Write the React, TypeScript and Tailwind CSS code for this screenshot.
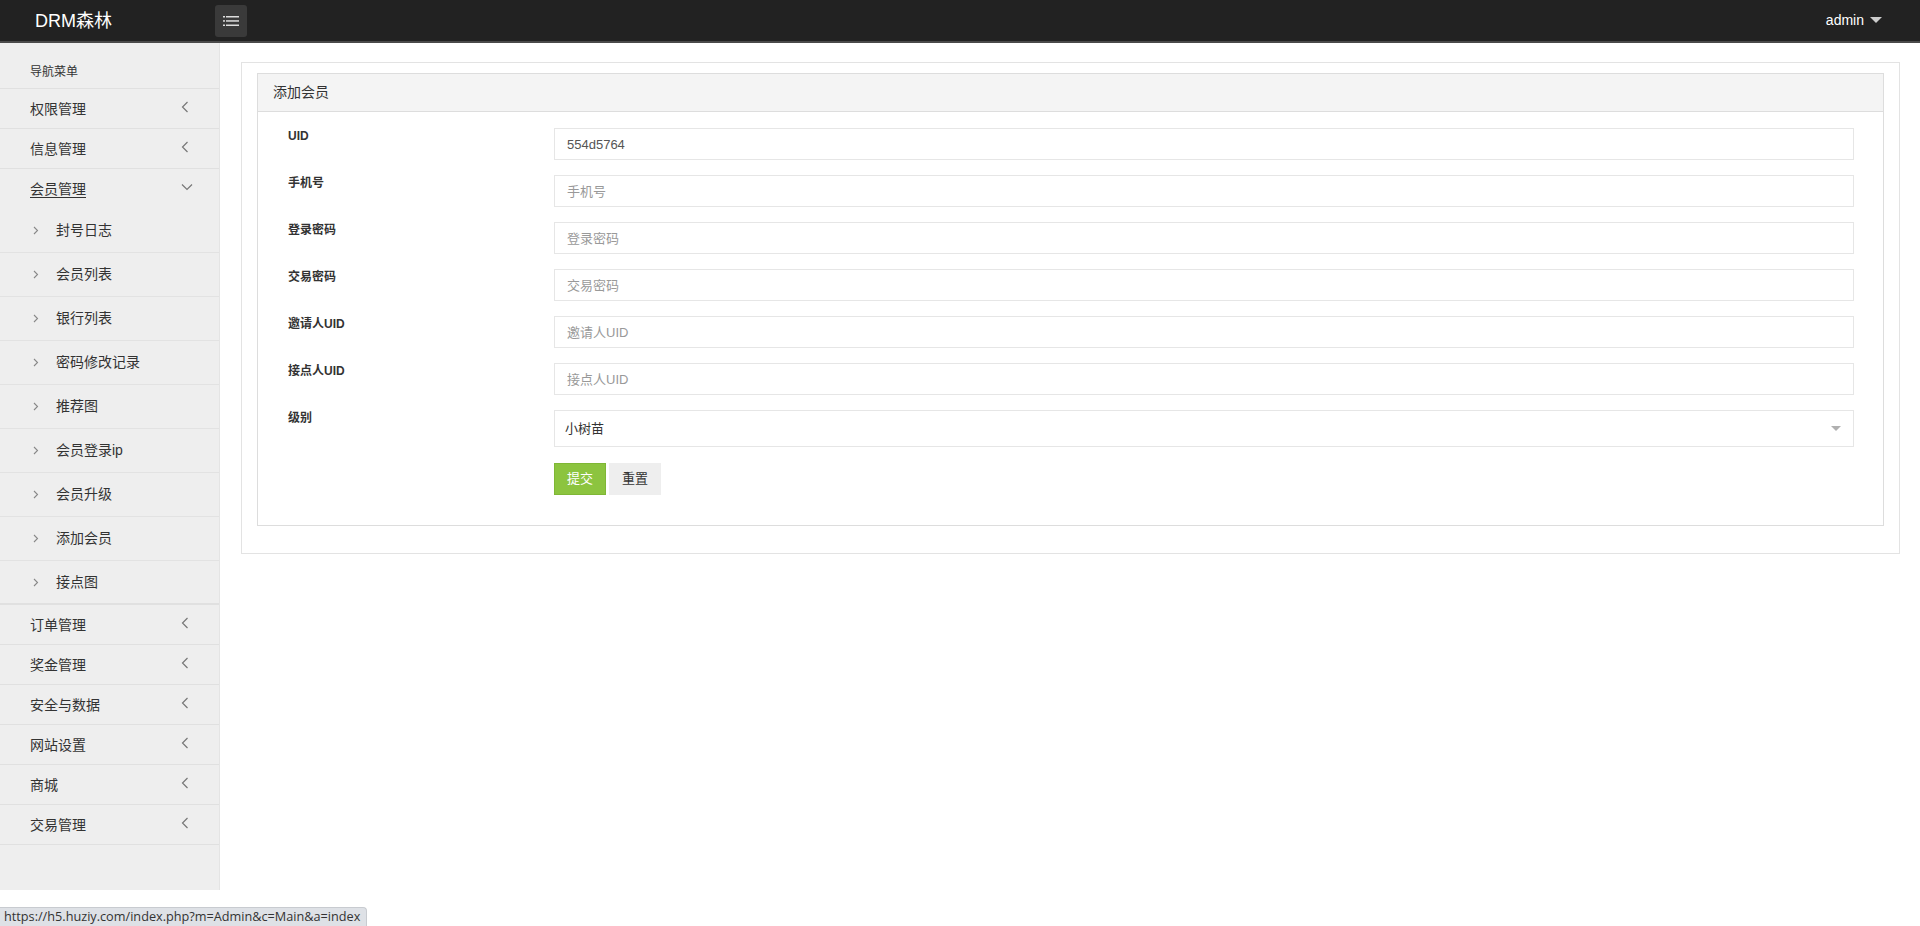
import React from "react";

const FONT = { fontFamily: '"Liberation Sans", Arial, "Noto Sans CJK SC", sans-serif' };

function ChevLeft() {
  return (
    <svg width="8" height="12" viewBox="0 0 8 12" className="block">
      <path d="M6.5 1 L1.5 6 L6.5 11" fill="none" stroke="#777" strokeWidth="1.2" />
    </svg>
  );
}
function ChevDown() {
  return (
    <svg width="12" height="8" viewBox="0 0 12 8" className="block">
      <path d="M1 1.5 L6 6.5 L11 1.5" fill="none" stroke="#777" strokeWidth="1.2" />
    </svg>
  );
}
function ChevRightSmall() {
  return (
    <svg width="6" height="9" viewBox="0 0 6 9" className="block">
      <path d="M1 1 L4.5 4.5 L1 8" fill="none" stroke="#888" strokeWidth="1.1" />
    </svg>
  );
}

function MenuItem({ label, right }: { label: string; right?: React.ReactNode }) {
  return (
    <div className="h-[40px] border-b border-[#e0e0e0] flex items-center pl-[30px] pr-[30px] text-[14px] text-[#333]">
      <span className="flex-1 pt-[1px]">{label}</span>
      <span className="-mt-[4px]">{right ?? <ChevLeft />}</span>
    </div>
  );
}

const subItems = ["封号日志", "会员列表", "银行列表", "密码修改记录", "推荐图", "会员登录ip", "会员升级", "添加会员", "接点图"];

function Field({ label, placeholder, value }: { label: string; placeholder: string; value?: string }) {
  return (
    <div className="flex mb-[15px]">
      <div className="w-[266px] shrink-0 text-[12px] font-bold text-[#333] leading-[16px]">{label}</div>
      <input
        className="flex-1 h-[32px] border border-[#e6e6e6] px-[12px] text-[13px] text-[#555] placeholder:text-[#999] outline-none"
        placeholder={placeholder}
        defaultValue={value}
      />
    </div>
  );
}

export default function App() {
  return (
    <div className="relative min-h-[926px] bg-white" style={FONT}>
      {/* header */}
      <div className="h-[43px] bg-[#222] border-b-2 border-[#4a4a4a] flex items-center">
        <div className="w-[215px] pl-[35px] text-[18px] text-white leading-none">DRM森林</div>
        <button className="w-[32px] h-[32px] rounded-[3px] bg-[#3a3a3a] flex items-center justify-center">
          <svg width="16" height="12" viewBox="0 0 16 12">
            <rect x="0" y="1" width="2" height="1.5" fill="#ddd" />
            <rect x="3" y="1" width="13" height="1.5" fill="#ddd" />
            <rect x="0" y="5.2" width="2" height="1.5" fill="#ddd" />
            <rect x="3" y="5.2" width="13" height="1.5" fill="#ddd" />
            <rect x="0" y="9.5" width="2" height="1.5" fill="#ddd" />
            <rect x="3" y="9.5" width="13" height="1.5" fill="#ddd" />
          </svg>
        </button>
        <div className="flex-1" />
        <div className="flex items-center gap-[6px] pr-[38px] text-[14px] text-white">
          <span>admin</span>
          <svg width="12" height="7" viewBox="0 0 12 7">
            <path d="M0 0 L12 0 L6 6 Z" fill="#ccc" />
          </svg>
        </div>
      </div>

      <div className="flex items-start">
        {/* sidebar */}
        <div className="w-[220px] shrink-0 bg-[#eee] border-r border-[#e4e4e4] pb-[45px]">
          <div className="h-[46px] border-b border-[#e0e0e0] pl-[30px] pt-[21px] text-[12px] leading-[16px] text-[#333]">导航菜单</div>
          <MenuItem label="权限管理" />
          <MenuItem label="信息管理" />
          <div className="h-[40px] flex items-center pl-[30px] pr-[26px] text-[14px] text-[#333]">
            <span className="flex-1 pt-[1px] underline underline-offset-[3px]">会员管理</span>
            <span className="-mt-[4px]"><ChevDown /></span>
          </div>
          <div className="border-b-2 border-[#e0e0e0]">
            {subItems.map((s, i) => (
              <div
                key={s}
                className={
                  i < subItems.length - 1
                    ? "h-[44px] flex items-center pl-[33px] text-[14px] text-[#333] border-b border-[#e2e2e2]"
                    : "h-[42px] flex items-center pl-[33px] text-[14px] text-[#333]"
                }
              >
                <span className="w-[23px]"><ChevRightSmall /></span>
                <span>{s}</span>
              </div>
            ))}
          </div>
          <MenuItem label="订单管理" />
          <MenuItem label="奖金管理" />
          <MenuItem label="安全与数据" />
          <MenuItem label="网站设置" />
          <MenuItem label="商城" />
          <MenuItem label="交易管理" />
        </div>

        {/* content */}
        <div className="flex-1 pl-[21px] pr-[20px] pt-[19px]">
          <div className="border border-[#e3e3e3] pt-[10px] px-[15px] pb-[27px]">
            <div className="border border-[#ddd]">
              <div className="h-[38px] bg-[#f4f4f4] border-b border-[#ddd] flex items-center pl-[15px] text-[14px] text-[#333]">添加会员</div>
              <div className="pt-[16px] pl-[30px] pr-[29px] pb-[30px]">
                <Field label="UID" placeholder="" value="554d5764" />
                <Field label="手机号" placeholder="手机号" />
                <Field label="登录密码" placeholder="登录密码" />
                <Field label="交易密码" placeholder="交易密码" />
                <Field label="邀请人UID" placeholder="邀请人UID" />
                <Field label="接点人UID" placeholder="接点人UID" />
                <div className="flex mb-[16px]">
                  <div className="w-[266px] shrink-0 text-[12px] font-bold text-[#333] leading-[16px]">级别</div>
                  <div className="flex-1 h-[37px] border border-[#e6e6e6] flex items-center pl-[10px] pr-[12px] text-[13px] text-[#333]">
                    <span className="flex-1">小树苗</span>
                    <svg width="10" height="5" viewBox="0 0 10 5">
                      <path d="M0 0 L10 0 L5 5 Z" fill="#b0b0b0" />
                    </svg>
                  </div>
                </div>
                <div className="flex pl-[266px] gap-[3px]">
                  <button className="w-[52px] h-[32px] bg-[#8cc43f] border border-[#7fb735] text-white text-[13px]">提交</button>
                  <button className="w-[52px] h-[32px] bg-[#eee] text-[#333] text-[13px]">重置</button>
                </div>
              </div>
            </div>
          </div>
        </div>
      </div>

      {/* browser status bubble */}
      <div className="absolute left-0 bottom-0 h-[19px] bg-[#dee1e6] border-t border-r border-[#c8cbd0] rounded-tr-[4px] pl-[4px] pr-[6px] flex items-center text-[12.7px] text-[#333]" style={{ fontFamily: '"Open Sans", "Liberation Sans", sans-serif' }}>
        https://h5.huziy.com/index.php?m=Admin&amp;c=Main&amp;a=index
      </div>
    </div>
  );
}
